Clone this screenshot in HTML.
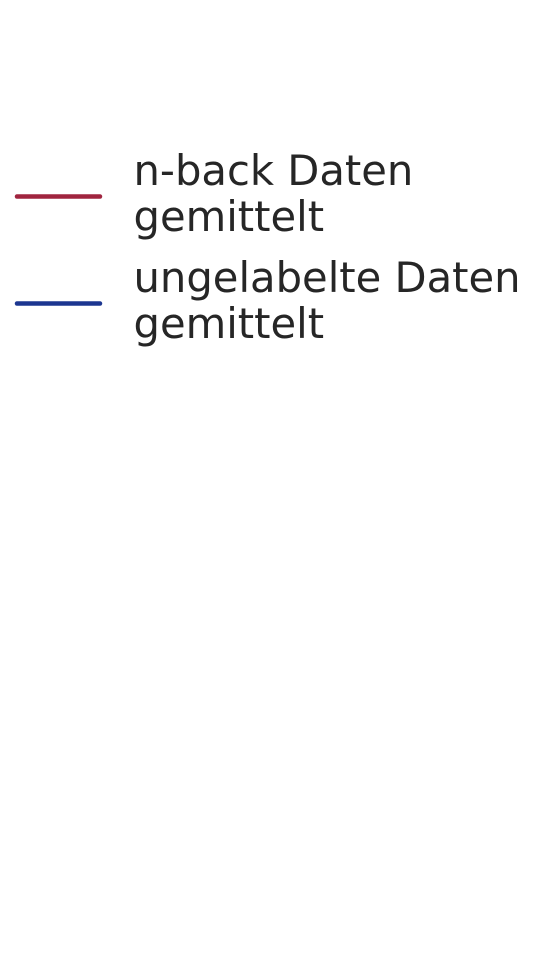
<!DOCTYPE html>
<html><head><meta charset="utf-8"><style>
html,body{margin:0;padding:0;background:#fff;width:535px;height:960px;overflow:hidden}
</style></head><body>
<svg width="535" height="960" xmlns="http://www.w3.org/2000/svg">
<line x1="17" y1="196.5" x2="100" y2="196.5" stroke="#a0243f" stroke-width="4.5" stroke-linecap="round"/>
<line x1="17" y1="303.5" x2="100" y2="303.5" stroke="#1c3690" stroke-width="4.5" stroke-linecap="round"/>
<g font-family="DejaVu Sans, sans-serif" font-size="41.7" fill="#262626">
<text x="133.5" y="185">n-back Daten</text>
<text x="133.5" y="231">gemittelt</text>
<text x="133.5" y="292">ungelabelte Daten</text>
<text x="133.5" y="338">gemittelt</text>
</g>
</svg>
</body></html>
